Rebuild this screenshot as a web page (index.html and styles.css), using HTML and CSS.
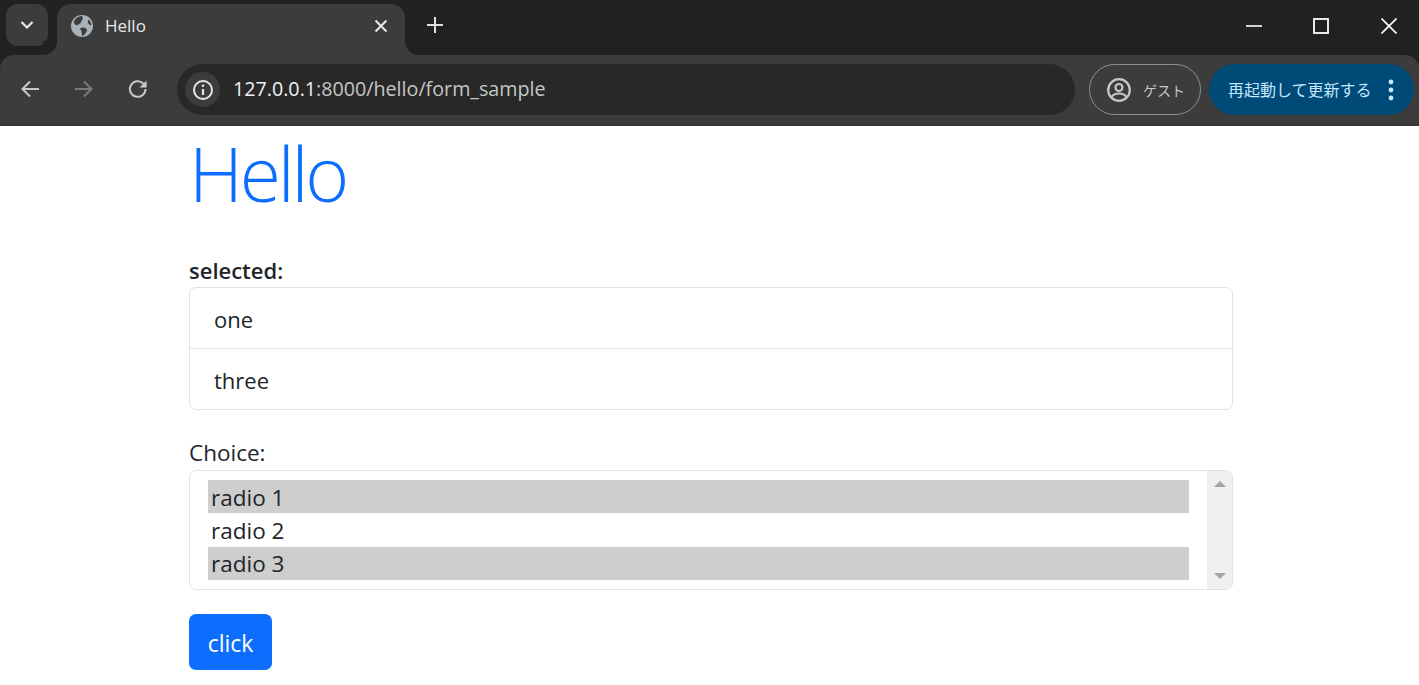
FILE: index.html
```html
<!DOCTYPE html>
<html lang="ja">
<head>
  <meta charset="UTF-8" />
  <title>Hello</title>
  <link rel="stylesheet" href="styles.css">
</head>
<body>
  <div class="browser">
    <div class="tabstrip">
      <div class="tab-search">
        <svg width="16" height="16" viewBox="0 0 16 16"><path d="M2.500 5 8 10.500 13.500 5" fill="none" stroke="#e8e8e8" stroke-width="2.200"/></svg>
      </div>
      <div class="tab">
        <svg class="favicon" width="24" height="24" viewBox="0 0 24 24">
          <circle cx="12" cy="12" r="11" fill="#a8b2ba"/>
          <path d="M5 5.500C7 3.500 9.500 2 12 2c1 1.500 1 3 0 4.500-1 1-1 2.500-2.500 3.500-1.500.5-2 1.500-3.500 1C4.800 10.500 3.800 9 3.800 7.500z" fill="#3c3c3c"/>
          <path d="M10.500 14c2-1 4-.5 5.500.5 1.500 1 1 2.500 0 4-1 1.500-2 2.500-3.500 3.500-1-1.500-.5-3-1-4.500-.5-1.200-1.700-2.300-1-3.500z" fill="#3c3c3c"/>
          <path d="M18.500 5.500c1.500 1.500 2.700 3.500 3 5.500-1.300.3-2.500-.5-3.500-2-.5-1-.2-2.500.5-3.500z" fill="#3c3c3c"/>
        </svg>
        <span class="tab-title">Hello</span>
        <svg class="tab-close" width="14" height="14" viewBox="0 0 14 14"><path d="M1.500 1.500l11 11M12.500 1.500l-11 11" stroke="#e8e8e8" stroke-width="2"/></svg>
      </div>
      <svg class="new-tab" width="16" height="16" viewBox="0 0 16 16"><path d="M8 0v16M0 8h16" stroke="#e0e0e0" stroke-width="2"/></svg>
      <div class="window-btns">
        <svg width="16" height="16" viewBox="0 0 16 16"><path d="M0 8h16" stroke="#fff" stroke-width="1.600"/></svg>
        <svg width="16" height="16" viewBox="0 0 16 16"><rect x="1" y="1" width="14" height="14" fill="none" stroke="#fff" stroke-width="1.800"/></svg>
        <svg width="16" height="16" viewBox="0 0 16 16"><path d="M.5.500l15 15M15.500.500l-15 15" stroke="#fff" stroke-width="1.600"/></svg>
      </div>
    </div>
    <div class="toolbar">
      <svg class="nav-icon" width="24" height="24" viewBox="0 0 24 24"><path d="M21 12H5M12 4.500 4.500 12l7.500 7.500" fill="none" stroke="#c8c8c8" stroke-width="2"/></svg>
      <svg class="nav-icon" width="24" height="24" viewBox="0 0 24 24"><path d="M3 12h16M12 4.500l7.500 7.500-7.500 7.500" fill="none" stroke="#7a7a7a" stroke-width="2"/></svg>
      <svg class="nav-icon" width="24" height="24" viewBox="0 0 24 24"><path d="M19.500 12a7.800 7.800 0 1 1-2.300-5.500L20 9" fill="none" stroke="#c8c8c8" stroke-width="2"/><path d="M20.500 3.500v7h-7z" fill="#c8c8c8"/></svg>
      <div class="omnibox">
        <div class="site-info">
          <svg width="24" height="24" viewBox="0 0 24 24"><circle cx="12" cy="12" r="9" fill="none" stroke="#e6e6e6" stroke-width="2"/><path d="M12 11v6" stroke="#e6e6e6" stroke-width="2.200"/><circle cx="12" cy="7.800" r="1.300" fill="#e6e6e6"/></svg>
        </div>
        <span class="url"><span class="url-host">127.0.0.1</span>:8000/hello/form_sample</span>
      </div>
      <div class="guest-chip">
        <svg width="26" height="26" viewBox="0 0 26 26"><circle cx="13" cy="13" r="10.800" fill="none" stroke="#c8c8c8" stroke-width="2.200"/><circle cx="13" cy="10.500" r="3.500" fill="none" stroke="#c8c8c8" stroke-width="2.200"/><path d="M5.500 20c2-3 5-3.500 7.500-3.500s5.500.5 7.500 3.500" fill="none" stroke="#c8c8c8" stroke-width="2.200"/></svg>
        <span>ゲスト</span>
      </div>
      <div class="update-chip">
        <span class="update-text">再起動して更新する</span>
        <svg width="6" height="22" viewBox="0 0 6 22"><circle cx="3" cy="3" r="2.400" fill="#c2e7ff"/><circle cx="3" cy="11" r="2.400" fill="#c2e7ff"/><circle cx="3" cy="19" r="2.400" fill="#c2e7ff"/></svg>
      </div>
    </div>
  </div>

  <main class="container">
    <h1 class="title">Hello</h1>

    <div class="selected-label">selected:</div>
    <ul class="list-group">
      <li class="list-item">one</li>
      <li class="list-item">three</li>
    </ul>

    <div class="field-label">Choice:</div>
    <div class="select-box">
      <div class="options">
        <div class="option picked">radio 1</div>
        <div class="option">radio 2</div>
        <div class="option picked">radio 3</div>
      </div>
      <div class="scrollbar">
        <span class="arrow-up"></span>
        <span class="arrow-down"></span>
      </div>
    </div>

    <button class="btn-primary">click</button>
  </main>
</body>
</html>
```

FILE: styles.css
```css
* {
  box-sizing: border-box;
}

body {
  margin: 0;
  height: 685px;
  overflow: hidden;
  font-family: "Open Sans", "Noto Sans CJK JP", sans-serif;
  background: #fff;
  color: #212529;
}

/* browser chrome */
.browser {
  height: 126px;
  background: #202222;
}

.tabstrip {
  height: 55px;
  display: flex;
  align-items: flex-start;
  padding: 4px 0 0 6px;
}

.tab-search {
  width: 42px;
  height: 42px;
  background: #3c3c3c;
  border-radius: 12px;
  display: flex;
  align-items: center;
  justify-content: center;
}

.tab {
  position: relative;
  width: 348px;
  height: 51px;
  margin-left: 9px;
  padding: 0 17px 8px 13px;
  background: #3c3c3c;
  border-radius: 14px 14px 0 0;
  display: flex;
  align-items: center;
  color: #e8e8e8;
}

.tab::before,
.tab::after {
  content: "";
  position: absolute;
  bottom: 0;
  width: 14px;
  height: 14px;
}

.tab::before {
  left: -14px;
  background: radial-gradient(circle at 0 0, #202222 13.500px, #3c3c3c 14.500px);
}

.tab::after {
  right: -14px;
  background: radial-gradient(circle at 100% 0, #202222 13.500px, #3c3c3c 14.500px);
}

.tab-title {
  margin-left: 11px;
  font-size: 17px;
  flex: 1;
}

.new-tab {
  margin: 13px 0 0 22px;
}

.window-btns {
  margin: 14px 0 0 auto;
  padding-right: 22px;
  display: flex;
  gap: 51px;
}

.window-btns svg:last-child {
  margin-left: 1px;
}

.toolbar {
  height: 71px;
  background: #3c3c3c;
  border-bottom: 2px solid #373737;
  border-radius: 14px 14px 0 0;
  display: flex;
  align-items: center;
  padding: 0 5px 0 18px;
}

.nav-icon {
  margin: 0 30px 2px 0;
}

.nav-icon:nth-child(3) {
  margin-right: 27px;
}

.omnibox {
  width: 898px;
  height: 51px;
  background: #282828;
  border-radius: 26px;
  display: flex;
  align-items: center;
  padding-left: 8px;
}

.site-info {
  width: 35px;
  height: 35px;
  background: #3c3c3c;
  border-radius: 50%;
  display: flex;
  align-items: center;
  justify-content: center;
}

.url {
  margin: 0 0 2px 13px;
  font-size: 19.700px;
  color: #c4c7c5;
}

.url-host {
  color: #f1f1f1;
}

.guest-chip {
  width: 112px;
  height: 51px;
  margin-left: 14px;
  border: 1.500px solid #8f8f8f;
  border-radius: 26px;
  display: flex;
  align-items: center;
  padding-left: 16px;
  gap: 11px;
  font-size: 14px;
  color: #c8c8c8;
}

.update-chip {
  width: 205px;
  height: 51px;
  margin-left: 8px;
  background: #004a77;
  border-radius: 26px;
  display: flex;
  align-items: center;
  padding-left: 19px;
  gap: 16px;
  font-size: 16px;
  color: #c2e7ff;
}

.update-text {
  margin-bottom: 2px;
}

/* page */
.container {
  width: 1044px;
  margin-left: 189px;
}

.title {
  margin: 0;
  padding-top: 2px;
  font-size: 75px;
  font-weight: 300;
  line-height: 1.2;
  letter-spacing: -3.200px;
  color: #0d6efd;
}

.selected-label {
  margin-top: 36px;
  font-size: 22px;
  font-weight: 600;
  line-height: 33px;
}

.list-group {
  list-style: none;
  margin: 0;
  padding: 0;
  border: 1px solid #dee2e6;
  border-radius: 7px;
}

.list-item {
  height: 60px;
  padding: 2px 24px 0;
  display: flex;
  align-items: center;
  font-size: 22px;
}

.list-item + .list-item {
  height: 61px;
  border-top: 1px solid #dee2e6;
}

.field-label {
  margin-top: 25px;
  font-size: 22.500px;
  line-height: 35px;
}

.select-box {
  height: 120px;
  border: 1px solid #dee2e6;
  border-radius: 7px;
  display: flex;
  overflow: hidden;
}

.options {
  flex: 1;
  padding: 9px 18px 0;
}

.option {
  height: 33.330px;
  padding: 1px 0 0 3px;
  display: flex;
  align-items: center;
  font-size: 22.500px;
}

.option.picked {
  background: #cecece;
}

.scrollbar {
  width: 25px;
  background: #f0f0f0;
  display: flex;
  flex-direction: column;
  justify-content: space-between;
  align-items: center;
  padding: 10px 0;
}

.arrow-up,
.arrow-down {
  width: 0;
  height: 0;
  border-left: 6px solid transparent;
  border-right: 6px solid transparent;
}

.arrow-up {
  border-bottom: 6px solid #a3a3a3;
}

.arrow-down {
  border-top: 6px solid #a3a3a3;
}

.btn-primary {
  display: block;
  width: 83px;
  height: 56px;
  margin-top: 24px;
  padding-top: 3px;
  background: #0d6efd;
  border: none;
  border-radius: 7px;
  color: #fff;
  font-family: inherit;
  font-size: 23px;
}
```
